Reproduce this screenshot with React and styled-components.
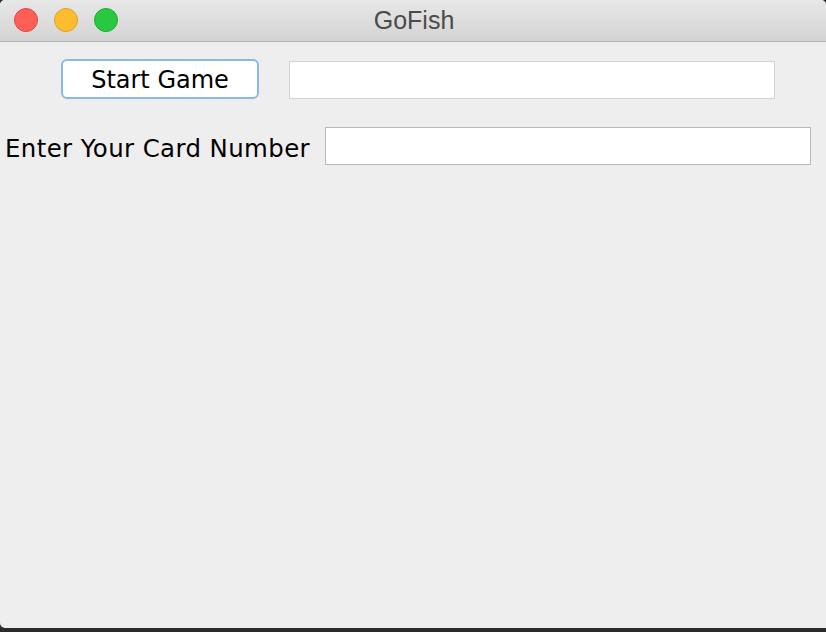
import React from "react";
import styled, { createGlobalStyle } from "styled-components";

const Global = createGlobalStyle`
  html, body { margin: 0; padding: 0; background: #2b2b2b; }
  body { width: 826px; height: 632px; overflow: hidden; }
  * { box-sizing: border-box; }
`;

const Window = styled.div`
  width: 826px;
  height: 628px;
  display: flex;
  flex-direction: column;
  background: #eeeeee;
  border-radius: 5px 5px 0 5px;
  overflow: hidden;
`;

const TitleBar = styled.div`
  position: relative;
  height: 42px;
  flex: none;
  display: flex;
  align-items: center;
  justify-content: center;
  background: linear-gradient(#e8e8e8, #d3d3d3);
  border-bottom: 1px solid #b1b1b1;
`;

const Lights = styled.div`
  position: absolute;
  left: 14px;
  top: 8px;
  display: flex;
  gap: 16px;
`;

const Light = styled.span`
  width: 24px;
  height: 24px;
  border-radius: 50%;
  background: ${(p) => p.$bg};
  border: 1px solid ${(p) => p.$edge};
`;

const Title = styled.div`
  font-family: "Liberation Sans", Arial, sans-serif;
  font-size: 25px;
  color: #4b4b4b;
  margin-left: 2px;
`;

const Content = styled.div`
  flex: 1;
  display: flex;
  flex-direction: column;
  font-family: "DejaVu Sans", sans-serif;
  color: #000;
`;

const Row = styled.div`
  display: flex;
  align-items: ${(p) => p.$align || "center"};
  padding-left: ${(p) => p.$left}px;
  margin-top: ${(p) => p.$top}px;
  gap: ${(p) => p.$gap}px;
`;

const Button = styled.button`
  width: 198px;
  height: 40px;
  border: 2px solid #8bb8ec;
  border-radius: 6px;
  background: #ffffff;
  font-family: "DejaVu Sans", sans-serif;
  font-size: 24px;
  color: #000;
  padding: 2px 0 0 0;
  display: flex;
  align-items: center;
  justify-content: center;
  cursor: default;
`;

const Field = styled.div`
  width: ${(p) => p.$w}px;
  height: 38px;
  background: #ffffff;
  border: 1px solid ${(p) => p.$border};
`;

const Label = styled.div`
  width: 303px;
  height: 38px;
  flex: none;
  font-size: 24.4px;
  letter-spacing: 0.42px;
  white-space: nowrap;
  line-height: 43px;
`;

export default function App() {
  return (
    <>
      <Global />
      <Window>
        <TitleBar>
          <Lights>
            <Light $bg="#ff5f57" $edge="#e2463f" />
            <Light $bg="#febc2e" $edge="#dfa023" />
            <Light $bg="#28c840" $edge="#1fab31" />
          </Lights>
          <Title>GoFish</Title>
        </TitleBar>
        <Content>
          <Row $left={61} $top={17} $gap={30} $align="flex-end">
            <Button>Start Game</Button>
            <Field $w={486} $border="#d3d3d3" />
          </Row>
          <Row $left={5} $top={28} $gap={17}>
            <Label>Enter Your Card Number</Label>
            <Field $w={486} $border="#b9b9b9" />
          </Row>
        </Content>
      </Window>
    </>
  );
}
